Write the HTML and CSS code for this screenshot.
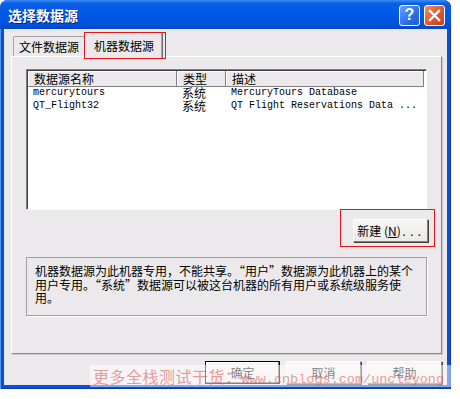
FILE: index.html
```html
<!DOCTYPE html>
<html lang="zh-CN">
<head>
  <meta charset="UTF-8" />
  <title>选择数据源</title>
  <link rel="stylesheet" href="styles.css">
</head>
<body>

  <div class="window">
    <div class="titlebar">
      <span class="title">选择数据源</span>
      <div class="title-buttons">
        <div class="tb-btn help">?</div>
        <div class="tb-btn close">
          <svg width="13" height="13" viewBox="0 0 13 13">
            <path d="M2 2 L11 11 M11 2 L2 11" stroke="#fff" stroke-width="2.4" stroke-linecap="square" />
          </svg>
        </div>
      </div>
    </div>

    <div class="client">
      <div class="tabs">
        <div class="tab">文件数据源</div>
        <div class="tab active">机器数据源<span class="mark mark-tab"></span></div>
      </div>

      <div class="panel">
        <div class="listview">
          <div class="lv-head">
            <div class="lv-col">数据源名称</div>
            <div class="lv-col">类型</div>
            <div class="lv-col last">描述</div>
          </div>
          <div class="lv-row">
            <div class="mono">mercurytours</div>
            <div>系统</div>
            <div class="mono">MercuryTours Database</div>
          </div>
          <div class="lv-row">
            <div class="mono">QT_Flight32</div>
            <div>系统</div>
            <div class="mono">QT Flight Reservations Data ...</div>
          </div>
        </div>

        <div class="new-row">
          <div class="mark-box">
            <button class="btn">新建 (<u>N</u>)<span class="mono">...</span></button>
          </div>
        </div>

        <div class="info">
          机器数据源为此机器专用，不能共享。“用户”数据源为此机器上的某个用户专用。“系统”数据源可以被这台机器的所有用户或系统级服务使用。
        </div>
      </div>

      <div class="actions">
        <button class="btn default">确定</button>
        <button class="btn">取消</button>
        <button class="btn">帮助</button>
      </div>

      <div class="watermark">更多全栈测试干货：<span class="wm-url">www.cnblogs.com/uncleyong</span></div>
    </div>
  </div>

</body>
</html>
```

FILE: styles.css
```css
body {
  margin: 0;
  background: #fff;
  font-family: "Noto Sans CJK SC", sans-serif;
  font-size: 12px;
  color: #000;
}

.window {
  width: 451px;
  height: 389px;
  box-sizing: border-box;
  background: #0a4fd6;
  border-radius: 8px 8px 0 0;
  padding: 0 4px 4px 4px;
  display: flex;
  flex-direction: column;
  box-shadow: inset 1px 0 0 #5e97f0, inset -1px 0 0 #0838b0, inset 0 -1px 0 #0838b0;
}

.titlebar {
  height: 29px;
  margin: 0 -4px;
  padding: 0 6px 0 8px;
  display: flex;
  align-items: center;
  justify-content: space-between;
  border-radius: 8px 8px 0 0;
  background: linear-gradient(#3b8cf5 0%, #0a5fe6 12%, #0058e8 50%, #0052dc 85%, #0346c2 100%);
}

.title {
  color: #fff;
  font-weight: bold;
  font-size: 14px;
  text-shadow: 1px 1px 0 #0a1e7a;
}

.title-buttons {
  display: flex;
  gap: 4px;
  margin-top: 1px;
}

.tb-btn {
  width: 19px;
  height: 19px;
  border: 1px solid #fff;
  border-radius: 3px;
  display: flex;
  align-items: center;
  justify-content: center;
  color: #fff;
  font-family: "Liberation Sans", sans-serif;
  font-weight: bold;
  font-size: 16px;
}

.help {
  background: linear-gradient(135deg, #6aa2f7, #2a6ee8 60%, #1d5ad8);
}

.close {
  background: linear-gradient(135deg, #f09070, #e0552a 55%, #c8401a);
}

.client {
  flex: 1;
  background: #ece9ec;
  padding: 2px 5px 0 7px;
  position: relative;
}

.tabs {
  display: flex;
  align-items: flex-end;
  height: 25px;
  padding-left: 2px;
  position: relative;
  z-index: 1;
}

.tab {
  height: 20px;
  padding: 0 5px;
  display: flex;
  align-items: center;
  border: 1px solid #a3a3a3;
  border-bottom: none;
  border-radius: 2px 2px 0 0;
  background: #ece9ec;
  box-sizing: border-box;
  position: relative;
}

.tab.active {
  height: 26px;
  margin-bottom: -2px;
  padding: 0 8px;
  border-color: #fff #6e6e6e #ece9ec #fff;
  box-shadow: inset -1px 0 0 #a3a3a3;
}

.mark {
  position: absolute;
  border: 1px solid #e8141c;
}

.mark-tab {
  left: -2px;
  top: -1px;
  width: 80px;
  height: 25px;
}

.panel {
  height: 298px;
  box-sizing: border-box;
  border: 1px solid;
  border-color: #fff #8c8c8c #8c8c8c #fff;
  box-shadow: 1px 1px 0 #c8c8c8;
  padding: 12px 14px 0 14px;
}

.listview {
  height: 141px;
  box-sizing: border-box;
  background: #fff;
  border: 1px solid;
  border-color: #808080 #fff #fff #808080;
  box-shadow: inset 1px 1px 0 #404040;
  padding: 1px 2px 0 1px;
}

.lv-head,
.lv-row {
  display: grid;
  grid-template-columns: 149px 49px 1fr;
}

.lv-head {
  height: 16px;
  background: #ece9ec;
}

.lv-col {
  padding-left: 6px;
  line-height: 15px;
  border-right: 1px solid #808080;
  border-bottom: 1px solid #808080;
  box-shadow: inset 1px 1px 0 #fff;
}

.lv-row {
  height: 13px;
  line-height: 13px;
}

.lv-head + .lv-row {
  margin-top: -1px;
}

.lv-row div {
  padding-left: 5px;
}

.mono {
  font-family: "Liberation Mono", monospace;
  font-size: 10px;
}

.new-row {
  display: flex;
  justify-content: flex-end;
  margin-right: -8px;
  margin-top: -1px;
}

.mark-box {
  width: 95px;
  height: 38px;
  box-sizing: border-box;
  border: 1px solid #e8141c;
  padding: 9px 6px 0 12px;
}

.btn {
  width: 75px;
  height: 23px;
  padding: 0;
  font-family: "Noto Sans CJK SC", sans-serif;
  font-size: 12px;
  color: #000;
  background: linear-gradient(#f7f6f4, #ebe9e6);
  border: 1px solid;
  border-color: #fff #808080 #808080 #fff;
  box-shadow: 1px 1px 0 #404040;
}

.btn u {
  text-decoration: underline;
}

.btn .mono {
  font-size: 11px;
  letter-spacing: 1px;
}

.info {
  margin-top: 10px;
  height: 59px;
  box-sizing: border-box;
  border: 1px solid #a0a0a0;
  box-shadow: 1px 1px 0 #fff;
  padding: 6px 4px 0 8px;
  line-height: 13.5px;
  font-feature-settings: "fwid";
}

.actions {
  display: flex;
  justify-content: flex-end;
  gap: 6px;
  margin-top: 7px;
  padding-right: 0;
}

.btn.default {
  border: 1px solid #000;
  box-shadow: inset -1px -1px 0 #808080, inset 1px 1px 0 #fff;
}

.watermark {
  position: absolute;
  left: 86px;
  top: 336px;
  width: 358px;
  height: 22px;
  background: rgba(255, 255, 255, 0.5);
  color: rgba(222, 90, 90, 0.6);
  font-size: 16px;
  line-height: 22px;
  letter-spacing: 0.5px;
  padding-left: 3px;
  white-space: nowrap;
  overflow: hidden;
}

.wm-url {
  font-family: "Liberation Mono", monospace;
  font-size: 13.5px;
  letter-spacing: 0;
}
```
